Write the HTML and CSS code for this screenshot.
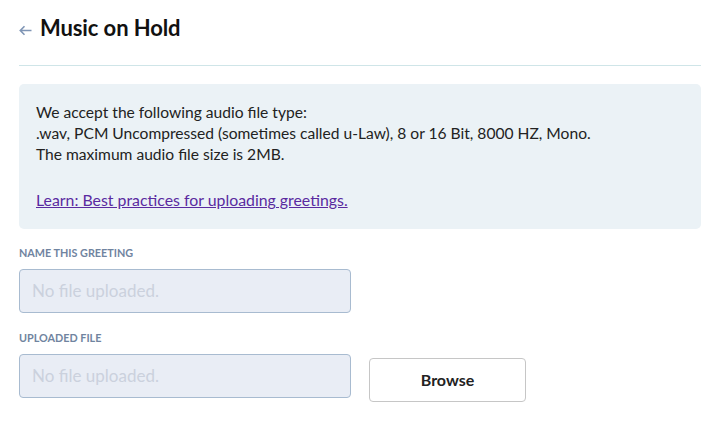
FILE: index.html
```html
<!DOCTYPE html>
<html>
<head>
<meta charset="utf-8">
<link rel="stylesheet" href="styles.css">
</head>
<body>
<div class="page">
  <header class="header">
    <svg class="back" width="13" height="11" viewBox="0 0 13 11"><path d="M12.5 5.5H1.5M5.5 1.3L1.3 5.5L5.5 9.7" fill="none" stroke="#7f95b5" stroke-width="1.6"/></svg>
    <h1 class="title">Music on Hold</h1>
  </header>
  <div class="info">
    <p class="info-text">We accept the following audio file type:<br>.wav, PCM Uncompressed (sometimes called u-Law), 8 or 16 Bit, 8000 HZ, Mono.<br>The maximum audio file size is 2MB.</p>
    <a class="info-link" href="#">Learn: Best practices for uploading greetings.</a>
  </div>
  <div class="field">
    <label class="label">NAME THIS GREETING</label>
    <div class="input">No file uploaded.</div>
  </div>
  <div class="field">
    <label class="label">UPLOADED FILE</label>
    <div class="row">
      <div class="input">No file uploaded.</div>
      <button class="browse">Browse</button>
    </div>
  </div>
</div>
</body>
</html>
```
FILE: styles.css
```css
html, body { margin: 0; padding: 0; background: #fff; }
body { font-family: Lato, "Open Sans", sans-serif; color: #1d1d1d; }
.page { padding: 0 21px 0 19px; }
.header { display: flex; align-items: flex-start; gap: 8px; height: 65px; border-bottom: 1px solid #cfe5e8; }
.back { flex: none; margin-top: 25px; }
.title { margin: 15px 0 0 0; font-size: 22px; line-height: 26px; font-weight: 700; color: #111; letter-spacing: -0.1px; }
.info { margin-top: 18px; background: #ebf2f6; border-radius: 5px; padding: 18px 17px 18px 17px; font-size: 15.6px; line-height: 21px; color: #222; }
.info-text { margin: 0 0 24px 0; }
.info-link { color: #5a2aa0; text-decoration: underline; font-size: 15.85px; }
.field { margin-top: 18px; }
.field + .field { margin-top: 19px; }
.label { display: block; font-size: 10.8px; font-weight: 700; color: #7084a0; line-height: 12px; letter-spacing: 0; }
.input { box-sizing: border-box; width: 332px; height: 44px; margin-top: 10px; background: #e9edf5; border: 1px solid #a8bbd0; border-radius: 4px; padding: 0 12px; font-size: 17px; line-height: 42px; color: #cbd1dd; }
.row { display: flex; align-items: flex-start; gap: 18px; }
.browse { box-sizing: border-box; width: 157px; height: 44px; margin-top: 14px; background: #fff; border: 1px solid #c6c6c6; border-radius: 4px; font-family: Lato, sans-serif; font-size: 16px; font-weight: 700; color: #222; padding-bottom: 2px; }
```
